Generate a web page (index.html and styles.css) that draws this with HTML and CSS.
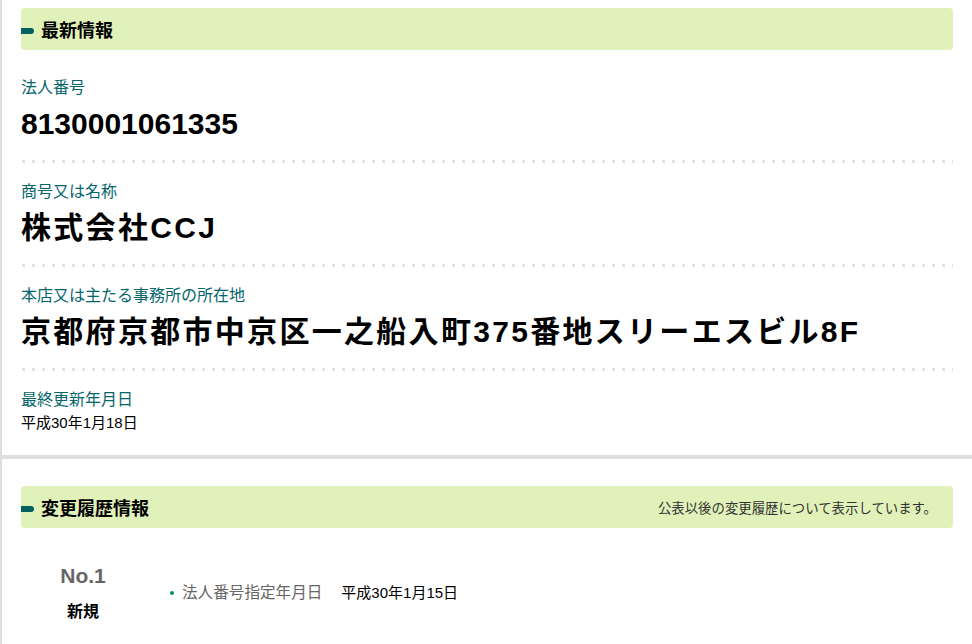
FILE: index.html
```html
<!DOCTYPE html>
<html lang="ja">
<head>
<meta charset="utf-8">
<title>法人情報</title>
<link rel="stylesheet" href="styles.css">
</head>
<body>
<section class="panel panel-latest">
  <h2 class="bar"><span class="bar-title">最新情報</span></h2>
  <dl class="info">
    <div class="item">
      <dt class="label">法人番号</dt>
      <dd class="value value-num">8130001061335</dd>
    </div>
    <div class="item">
      <dt class="label">商号又は名称</dt>
      <dd class="value value-text">株式会社CCJ</dd>
    </div>
    <div class="item">
      <dt class="label">本店又は主たる事務所の所在地</dt>
      <dd class="value value-text">京都府京都市中京区一之船入町375番地スリーエスビル8F</dd>
    </div>
    <div class="item item-last">
      <dt class="label">最終更新年月日</dt>
      <dd class="value-small">平成30年1月18日</dd>
    </div>
  </dl>
</section>
<section class="panel panel-history">
  <h2 class="bar"><span class="bar-title">変更履歴情報</span><span class="bar-note">公表以後の変更履歴について表示しています。</span></h2>
  <div class="hist-row">
    <div class="hist-no">
      <div class="no">No.1</div>
      <div class="kind">新規</div>
    </div>
    <ul class="hist-list">
      <li class="hist-item"><span class="hist-label">法人番号指定年月日</span><span class="hist-value">平成30年1月15日</span></li>
    </ul>
  </div>
</section>
</body>
</html>
```
FILE: styles.css
```css
html, body {
  margin: 0;
  padding: 0;
}
body {
  background: #dedede;
  font-family: "Liberation Sans", "Noto Sans CJK JP", sans-serif;
  color: #000;
}
.panel {
  background: #fff;
  margin-left: 2px;
  padding: 8px 19px 0 19px;
}
.panel-latest {
  padding-bottom: 22px;
}
.panel-history {
  margin-top: 4px;
  padding-top: 27px;
  padding-bottom: 60px;
}
.bar {
  box-sizing: border-box;
  margin: 0;
  height: 42px;
  display: flex;
  align-items: center;
  background: #e0f1b9;
  border-radius: 4px;
  padding: 3px 16px 0 0;
  font-size: 18px;
  font-weight: bold;
  line-height: 1;
}
.bar::before {
  content: "";
  display: block;
  width: 13px;
  height: 6px;
  background: #00625f;
  border-radius: 0 3px 3px 0;
  margin-right: 7px;
}
.bar-title {
  color: #000;
}
.bar-note {
  margin-left: auto;
  font-size: 13.4px;
  font-weight: normal;
  color: #333;
}
.info {
  margin: 28px 0 0 0;
  padding: 0;
}
.item {
  margin-bottom: 19px;
  padding-bottom: 21px;
  background-image: linear-gradient(to right, #e2e2e2 3px, transparent 3px);
  background-size: 10px 3px;
  background-repeat: repeat-x;
  background-position: 1px 100%;
}
.item-last {
  margin-bottom: 0;
  padding-bottom: 0;
  background: none;
}
.label {
  margin: 0;
  font-size: 16px;
  line-height: 20px;
  color: #04666b;
}
.value {
  margin: 8px 0 0 0;
  font-size: 30px;
  line-height: 36px;
  font-weight: bold;
}
.value-text {
  letter-spacing: 2.3px;
}
.value-small {
  margin: 3px 0 0 0;
  font-size: 15px;
  line-height: 20px;
}
.hist-row {
  margin-top: 36px;
  display: flex;
  align-items: center;
}
.hist-no {
  width: 124px;
  text-align: center;
}
.no {
  font-size: 21px;
  line-height: 24px;
  font-weight: bold;
  color: #666;
}
.kind {
  margin-top: 14px;
  font-size: 16px;
  line-height: 20px;
  font-weight: bold;
}
.hist-list {
  list-style: none;
  margin: 0;
  padding: 0 0 0 25px;
}
.hist-item {
  display: flex;
  align-items: center;
  font-size: 15px;
  line-height: 20px;
}
.hist-item::before {
  content: "";
  display: block;
  width: 4px;
  height: 4px;
  border-radius: 50%;
  background: #0a9052;
  margin-right: 8px;
}
.hist-label {
  font-size: 15.6px;
  color: #666;
}
.hist-value {
  margin-left: 19px;
  color: #000;
}
```
